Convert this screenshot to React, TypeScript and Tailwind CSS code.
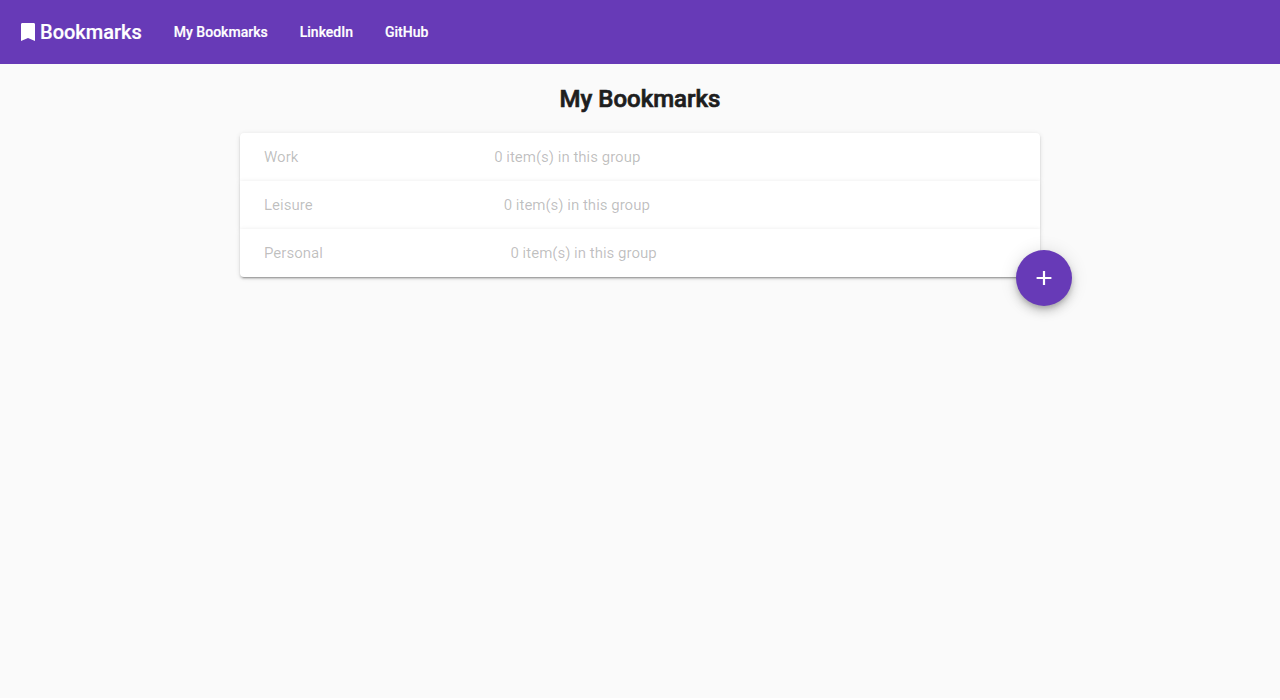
const links = ["My Bookmarks", "LinkedIn", "GitHub"];
const groups = ["Work", "Leisure", "Personal"];

function BookmarkIcon() {
  return (
    <svg viewBox="0 0 24 24" className="size-6" fill="currentColor">
      <path d="M17.6 3H6.4C5.6 3 5 3.6 5 4.4V21l7-3 7 3V4.4C19 3.6 18.4 3 17.6 3z" />
    </svg>
  );
}

function AddIcon() {
  return (
    <svg viewBox="0 0 24 24" className="size-6" fill="currentColor">
      <path d="M19.4 13.1h-6.3V19h-2.2v-5.9H4.6v-2.2h6.3V5h2.2v5.9h6.3z" />
    </svg>
  );
}

export default function App() {
  return (
    <div className="min-h-[698px] bg-[#fafafa] font-['Roboto',sans-serif] text-black/87">
      <header className="flex h-16 items-center bg-[#673ab7] px-4 text-white">
        <a className="flex items-center text-xl font-medium [-webkit-text-stroke:0.2px_white]">
          <BookmarkIcon />
          Bookmarks
        </a>
        <nav className="ml-4 flex">
          {links.map((l) => (
            <a key={l} className="px-4 text-sm font-medium tracking-[0.01px] [-webkit-text-stroke:0.2px_white]">{l}</a>
          ))}
        </nav>
      </header>
      <main className="mx-auto w-[800px]">
        <h1 className="flex h-[69px] items-center justify-center text-2xl font-medium text-[#1e1e1e] [-webkit-text-stroke:0.7px_#1e1e1e]">My Bookmarks</h1>
        <div className="relative">
          <ul>
            {groups.map((g) => (
              <li key={g} className="relative flex h-12 items-center bg-white px-6 text-[15px] text-black/26 shadow-[0_3px_1px_-2px_rgba(0,0,0,0.2),0_2px_2px_0_rgba(0,0,0,0.14),0_1px_5px_0_rgba(0,0,0,0.12)] first:rounded-t last:rounded-b">
                <span className="mr-4 grow">{g}</span>
                <span className="mr-4 grow-2">0 item(s) in this group</span>
              </li>
            ))}
          </ul>
          <button className="absolute -right-8 top-[117px] flex size-14 items-center justify-center rounded-full bg-[#673ab7] text-white shadow-[0_3px_5px_-1px_rgba(0,0,0,0.2),0_6px_10px_0_rgba(0,0,0,0.14),0_1px_18px_0_rgba(0,0,0,0.12)]">
            <AddIcon />
          </button>
        </div>
      </main>
    </div>
  );
}
